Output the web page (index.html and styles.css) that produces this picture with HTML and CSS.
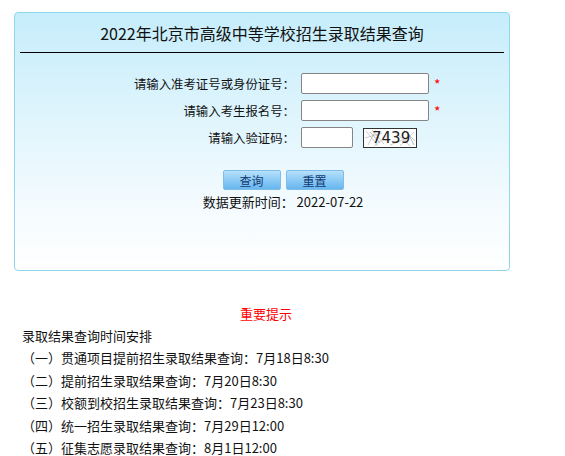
FILE: index.html
```html
<!DOCTYPE html>
<html lang="zh-CN">
<head>
    <meta charset="UTF-8">
    <title>2022年北京市高级中等学校招生录取结果查询</title>
    <link rel="stylesheet" href="styles.css">
</head>
<body>
    <div class="page">
        <div class="query-box">
            <div class="title">2022年北京市高级中等学校招生录取结果查询</div>
            <form class="query-form">
                <div class="form-row">
                    <label class="label">请输入准考证号或身份证号：</label>
                    <input type="text" class="input">
                    <span class="required">*</span>
                </div>
                <div class="form-row">
                    <label class="label">请输入考生报名号：</label>
                    <input type="text" class="input">
                    <span class="required">*</span>
                </div>
                <div class="form-row">
                    <label class="label">请输入验证码：</label>
                    <input type="text" class="input input-short">
                    <span class="captcha">
                        <svg width="52" height="18" viewBox="0 0 52 18">
                            <path d="M2 2 L14 17 M4 16 L12 1 M8 1 L20 15 M1 9 L18 4 M10 17 L24 6 M30 2 L46 17 M36 17 L50 3 M40 1 L51 12 M26 16 L44 9" stroke="#b8b8b8" stroke-width="0.7" fill="none"/>
                            <path d="M6 3 L16 14 M44 4 L50 16" stroke="#888" stroke-width="0.6" fill="none"/>
                        </svg>
                        <span class="captcha-text">7439</span>
                    </span>
                </div>
                <div class="actions">
                    <div class="buttons">
                        <button type="button" class="btn">查询</button>
                        <button type="reset" class="btn">重置</button>
                    </div>
                    <div class="update-time">数据更新时间： 2022-07-22</div>
                </div>
            </form>
        </div>

        <div class="notice">
            <div class="notice-title">重要提示</div>
            <div class="notice-line">录取结果查询时间安排</div>
            <div class="notice-line">（一）贯通项目提前招生录取结果查询：7月18日8:30</div>
            <div class="notice-line">（二）提前招生录取结果查询：7月20日8:30</div>
            <div class="notice-line">（三）校额到校招生录取结果查询：7月23日8:30</div>
            <div class="notice-line">（四）统一招生录取结果查询：7月29日12:00</div>
            <div class="notice-line">（五）征集志愿录取结果查询：8月1日12:00</div>
        </div>
    </div>
</body>
</html>
```

FILE: styles.css
```css
body {
    margin: 0;
    font-family: "Noto Sans CJK SC", "Noto Sans", sans-serif;
    color: #111;
    background: #fff;
}

.page {
    width: 496px;
    padding: 12px 0 0 14px;
}

.query-box {
    height: 257px;
    border: 1px solid #8fd6ec;
    border-radius: 4px;
    background: linear-gradient(#c6edfb, #f4fbfe 75%, #ffffff);
    padding: 0 5px;
}

.title {
    font-size: 16px;
    line-height: 24px;
    text-align: center;
    padding: 8px 0 7px;
    border-bottom: 1px solid #000;
}

.query-form {
    padding-top: 20px;
}

.form-row {
    display: flex;
    align-items: center;
    height: 21px;
    margin-bottom: 6px;
}

.label {
    width: 275px;
    text-align: right;
    font-size: 12.4px;
    margin-right: 6px;
}

.input {
    width: 128px;
    height: 21px;
    box-sizing: border-box;
    border: 1px solid #858585;
    border-radius: 2px;
    background: #fff;
    margin: 0;
    padding: 0 2px;
}

.input-short {
    width: 52px;
}

.required {
    color: #f00;
    font-size: 14px;
    margin-left: 5px;
    align-self: flex-start;
    line-height: 22px;
}

.captcha {
    position: relative;
    width: 54px;
    height: 20px;
    box-sizing: border-box;
    border: 1px solid #333;
    background: #fff;
    margin-left: 10px;
}

.captcha svg {
    position: absolute;
    left: 0;
    top: 0;
}

.captcha-text {
    position: absolute;
    left: 8px;
    top: 0;
    font-family: "DejaVu Sans", sans-serif;
    font-size: 15px;
    line-height: 18px;
    color: #222;
}

.actions {
    padding: 16px 0 0 42px;
    text-align: center;
}

.buttons {
    display: flex;
    justify-content: center;
    gap: 5px;
}

.btn {
    width: 58px;
    height: 20px;
    padding: 0;
    font-family: "Noto Sans CJK SC", sans-serif;
    font-size: 12px;
    color: #123a73;
    border: 1px solid #7dbde8;
    border-radius: 2px;
    background: linear-gradient(#b7e0fb, #8ccbf5 50%, #68b6ef);
    cursor: pointer;
}

.update-time {
    font-size: 13px;
    line-height: 20px;
    margin-top: 2px;
}

.notice {
    padding-top: 32px;
    padding-left: 8px;
    font-size: 13px;
}

.notice-title {
    color: #f00;
    text-align: center;
    line-height: 22px;
}

.notice-line {
    line-height: 22.4px;
}
```
